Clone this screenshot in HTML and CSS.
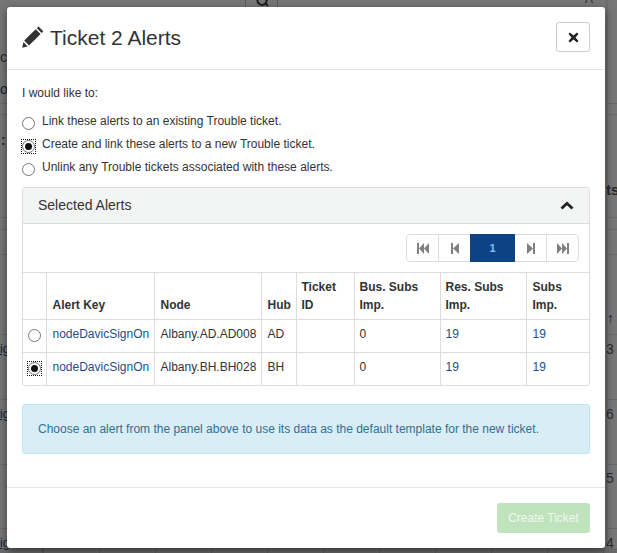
FILE: index.html
```html
<!DOCTYPE html>
<html lang="en">
  <head>
    <meta charset="UTF-8" />
    <title>Ticket 2 Alerts</title>
    <link rel="stylesheet" href="styles.css">
  </head>
  <body>
    <div class="backdrop">
      <span class="bg-line bg-line-a"></span>
      <span class="bg-line bg-line-b"></span>
      <span class="bg-line bg-line-c"></span>
      <span class="bg-line bg-line-d"></span>
      <span class="bg-line bg-line-e"></span>
      <span class="bg-line bg-line-f"></span>
      <span class="bg-line bg-line-g"></span>
      <span class="bg-line bg-line-h"></span>
      <span class="bg-line bg-line-i"></span>
      <span class="bg-band"></span>
      <span class="bg-ticks"></span>
      <span class="bg-frag bg-search">
        <svg width="14" height="8" viewBox="0 0 14 8"><path d="M6 -4a4.500 4.500 0 1 0 0.100 0zM9 3l3 3" fill="none" stroke="#1c1c1c" stroke-width="2"/></svg>
      </span>
      <span class="bg-frag bg-top">A</span>
      <span class="bg-frag bg-l1">c</span>
      <span class="bg-frag bg-l2">o</span>
      <span class="bg-frag bg-l3">:</span>
      <span class="bg-frag bg-l4">ig</span>
      <span class="bg-frag bg-l5">ig</span>
      <span class="bg-frag bg-l6">ig</span>
      <span class="bg-frag bg-r1">ts</span>
      <span class="bg-frag bg-r2">&#8593;</span>
      <span class="bg-frag bg-r3">3</span>
      <span class="bg-frag bg-r4">6</span>
      <span class="bg-frag bg-r5">5</span>
      <span class="bg-frag bg-r6">4</span>
    </div>

    <div class="modal">
      <div class="modal-header">
        <h4 class="modal-title">
          <svg class="pencil" width="22" height="22" viewBox="0 0 22 22">
            <path d="M16.500 0.500l4.800 4.800-1.600 1.700-4.900-4.800zM13.700 3.200l4.900 4.900L7 19.400 2.200 14.600zM1.400 16l4.300 4.400-5.500 1.300z" fill="#333"/>
          </svg>
          Ticket 2 Alerts
        </h4>
        <button class="btn-close">
          <svg width="11" height="11" viewBox="0 0 11 11">
            <path d="M2 0.500L5.500 3.500 9 0.500 10.500 2 7.500 5.500 10.500 9 9 10.500 5.500 7.500 2 10.500 0.500 9 3.500 5.500 0.500 2z" fill="#222"/>
          </svg>
        </button>
      </div>

      <div class="modal-body">
        <p class="intro">I would like to:</p>
        <div class="choices">
          <label class="choice"><span class="radio"></span>Link these alerts to an existing Trouble ticket.</label>
          <label class="choice"><span class="radio checked focused"></span>Create and link these alerts to a new Trouble ticket.</label>
          <label class="choice"><span class="radio"></span>Unlink any Trouble tickets associated with these alerts.</label>
        </div>

        <div class="panel">
          <div class="panel-heading">
            <span>Selected Alerts</span>
            <svg width="14" height="9" viewBox="0 0 14 9">
              <path d="M7 0.500L13.500 6.500 11.500 8.500 7 4.300 2.500 8.500 0.500 6.500z" fill="#222"/>
            </svg>
          </div>
          <div class="toolbar">
            <div class="pager">
              <a class="page">
                <svg width="12" height="11" viewBox="0 0 12 11"><path d="M0 0h2v11H0zM2 5.500l5-5.500v11zM7 5.500l5-5.500v11z" fill="#808080"/></svg>
              </a>
              <a class="page page-narrow">
                <svg width="8" height="11" viewBox="0 0 8 11"><path d="M0 0h2v11H0zM2 5.500l6-5.500v11z" fill="#808080"/></svg>
              </a>
              <a class="page page-active">1</a>
              <a class="page">
                <svg width="8" height="11" viewBox="0 0 8 11"><path d="M8 0H6v11h2zM6 5.500L0 0v11z" fill="#808080"/></svg>
              </a>
              <a class="page page-narrow">
                <svg width="12" height="11" viewBox="0 0 12 11"><path d="M12 0h-2v11h2zM10 5.500L5 0v11zM5 5.500L0 0v11z" fill="#808080"/></svg>
              </a>
            </div>
          </div>
          <table class="alerts">
            <colgroup>
              <col class="col-pick" />
              <col class="col-key" />
              <col class="col-node" />
              <col class="col-hub" />
              <col class="col-ticket" />
              <col class="col-imp" />
              <col class="col-imp" />
              <col />
            </colgroup>
            <thead>
              <tr>
                <th></th>
                <th>Alert Key</th>
                <th>Node</th>
                <th>Hub</th>
                <th class="tight">Ticket ID</th>
                <th class="tight">Bus. Subs Imp.</th>
                <th class="tight">Res. Subs Imp.</th>
                <th>Subs Imp.</th>
              </tr>
            </thead>
            <tbody>
              <tr>
                <td class="pick"><span class="radio"></span></td>
                <td><a class="link">nodeDavicSignOn</a></td>
                <td>Albany.AD.AD008</td>
                <td>AD</td>
                <td class="tight"></td>
                <td class="tight">0</td>
                <td class="tight"><a class="link">19</a></td>
                <td><a class="link">19</a></td>
              </tr>
              <tr>
                <td class="pick"><span class="radio checked focused"></span></td>
                <td><a class="link">nodeDavicSignOn</a></td>
                <td>Albany.BH.BH028</td>
                <td>BH</td>
                <td class="tight"></td>
                <td class="tight">0</td>
                <td class="tight"><a class="link">19</a></td>
                <td><a class="link">19</a></td>
              </tr>
            </tbody>
          </table>
        </div>

        <div class="alert-info">Choose an alert from the panel above to use its data as the default template for the new ticket.</div>
      </div>

      <div class="modal-footer">
        <button class="btn-create" disabled>Create Ticket</button>
      </div>
    </div>
  </body>
</html>
```

FILE: styles.css
```css
* {
  box-sizing: border-box;
}
html,
body {
  height: 100%;
}
body {
  margin: 0;
  padding: 7px 12px 5px 7px;
  overflow: hidden;
  position: relative;
  background: #767676;
  font-family: "Liberation Sans", Arial, sans-serif;
  font-size: 12px;
  line-height: 17px;
  color: #333;
}

/* dimmed page behind the dialog */
.backdrop {
  position: absolute;
  inset: 0;
}
.bg-line {
  position: absolute;
  left: 0;
  right: 0;
  height: 1px;
  background: #696969;
}
.bg-line-a {
  top: 103px;
}
.bg-line-b {
  top: 114px;
}
.bg-line-c {
  top: 217px;
}
.bg-line-d {
  top: 229px;
}
.bg-line-e {
  top: 254px;
}
.bg-line-f {
  top: 334px;
}
.bg-line-g {
  top: 399px;
}
.bg-line-h {
  top: 464px;
}
.bg-line-i {
  top: 528px;
}
.bg-band {
  position: absolute;
  top: 0;
  bottom: 0;
  left: 606px;
  width: 2px;
  background: #6c6c6c;
}
.bg-ticks {
  position: absolute;
  left: 0;
  right: 0;
  bottom: 0;
  height: 5px;
  background-color: #6a6a6a;
  background-image: repeating-linear-gradient(90deg, #5a5a5a 0 1px, transparent 1px 56px);
  background-position: 43px 0;
}
.bg-frag {
  position: absolute;
  font-size: 14px;
  line-height: 16px;
  color: #2b2b2b;
}
.bg-search {
  left: 245px;
  top: 0;
  width: 33px;
  height: 7px;
  padding-left: 10px;
  border-left: 1px solid #5c5c5c;
  border-right: 1px solid #5c5c5c;
  line-height: 0;
}
.bg-top {
  left: 585px;
  top: -9px;
  font-size: 12px;
}
.bg-l1 {
  left: 0;
  top: 49px;
}
.bg-l2 {
  left: 0;
  top: 81px;
  color: #10243f;
}
.bg-l3 {
  left: 1px;
  top: 132px;
  font-weight: bold;
}
.bg-l4 {
  left: 0;
  top: 341px;
  font-size: 12px;
  color: #10243f;
  text-decoration: underline;
}
.bg-l5 {
  left: 0;
  top: 406px;
  font-size: 12px;
  color: #10243f;
  text-decoration: underline;
}
.bg-l6 {
  left: 0;
  top: 535px;
  font-size: 12px;
  color: #10243f;
  text-decoration: underline;
}
.bg-r1 {
  left: 606px;
  top: 182px;
  font-weight: bold;
  font-size: 15px;
}
.bg-r2 {
  left: 607px;
  top: 310px;
  font-weight: bold;
  color: #10243f;
}
.bg-r3 {
  left: 606px;
  top: 341px;
}
.bg-r4 {
  left: 606px;
  top: 406px;
}
.bg-r5 {
  left: 606px;
  top: 470px;
}
.bg-r6 {
  left: 606px;
  top: 535px;
}

.modal {
  position: relative;
  height: 541px;
  background: #fff;
  border-radius: 3px;
  box-shadow: 0 3px 9px rgba(0, 0, 0, 0.5);
  display: flex;
  flex-direction: column;
}
.modal-header {
  height: 63px;
  padding: 15px 15px 0;
  border-bottom: 1px solid #e5e5e5;
  display: flex;
  justify-content: space-between;
  align-items: flex-start;
}
.modal-title {
  margin: 0;
  padding-top: 1px;
  display: flex;
  align-items: center;
  gap: 6px;
  height: 31px;
  font-size: 21px;
  font-weight: normal;
  line-height: 30px;
}
.pencil {
  margin-top: -3px;
}
.btn-close {
  width: 34px;
  height: 30px;
  padding: 0;
  background: #fff;
  border: 1px solid #ccc;
  border-radius: 3px;
  display: flex;
  align-items: center;
  justify-content: center;
}

.modal-body {
  flex: 1;
  padding: 15px 15px 0;
}
.intro {
  margin: 0 0 11px;
}
.choices {
  display: flex;
  flex-direction: column;
  gap: 6px;
  margin-bottom: 11px;
}
.choice {
  display: flex;
  align-items: center;
  gap: 7px;
  height: 17px;
}
.radio {
  flex: none;
  display: inline-block;
  position: relative;
  top: 2px;
  width: 13px;
  height: 13px;
  background: #fff;
  border: 1px solid #767676;
  border-radius: 50%;
}
.radio.checked::after {
  content: "";
  position: absolute;
  inset: 2px;
  background: #111;
  border-radius: 50%;
}
/* square dotted focus ring of the old browser */
.radio.focused::before {
  content: "";
  position: absolute;
  inset: -2px;
  border: 1px dotted #111;
}

.panel {
  border: 1px solid #ddd;
  border-radius: 3px;
  margin-bottom: 18px;
  overflow: hidden;
}
.panel-heading {
  height: 36px;
  padding: 0 15px;
  background: #f3f5f5;
  border-bottom: 1px solid #ddd;
  display: flex;
  align-items: center;
  justify-content: space-between;
  font-size: 14px;
}
.toolbar {
  height: 49px;
  padding: 10px 10px 0;
  border-bottom: 1px solid #ddd;
  display: flex;
  justify-content: flex-end;
}
.pager {
  display: flex;
  height: 28px;
  border: 1px solid #ddd;
  border-radius: 4px;
}
.page {
  width: 32px;
  display: flex;
  align-items: center;
  justify-content: center;
  border-right: 1px solid #ddd;
}
.page-narrow {
  width: 31px;
  border-right: none;
}
.page-active {
  width: 45px;
  margin: -1px 0;
  background: #0d4287;
  border-right: none;
  color: #7fc4f0;
  font-size: 11px;
  font-weight: bold;
}

.alerts {
  width: 100%;
  table-layout: fixed;
  border-collapse: collapse;
}
.col-pick {
  width: 23px;
}
.col-key {
  width: 108px;
}
.col-node {
  width: 107px;
}
.col-hub {
  width: 35px;
}
.col-ticket {
  width: 58px;
}
.col-imp {
  width: 86px;
}
.alerts th,
.alerts td {
  border: 1px solid #ddd;
  text-align: left;
  vertical-align: top;
}
.alerts tr > :first-child {
  border-left: none;
}
.alerts tr > :last-child {
  border-right: none;
}
.alerts thead tr > * {
  border-top: none;
}
.alerts tbody tr:last-child > * {
  border-bottom: none;
}
.alerts th {
  height: 46px;
  padding: 4px 5px 5px 6px;
  line-height: 18px;
  vertical-align: bottom;
}
.alerts td {
  height: 33px;
  padding: 6px 5px 5px 6px;
  white-space: nowrap;
}
.alerts .tight {
  padding-left: 5px;
}
.alerts .pick {
  padding: 7px 0 0 5px;
}
.link {
  color: #1a4f8b;
}

.alert-info {
  height: 50px;
  padding: 0 15px;
  display: flex;
  align-items: center;
  background: #d9edf7;
  border: 1px solid #bce8f1;
  border-radius: 3px;
  color: #31708f;
}

.modal-footer {
  height: 61px;
  padding: 15px 15px 0;
  border-top: 1px solid #e5e5e5;
  display: flex;
  justify-content: flex-end;
}
.btn-create {
  width: 93px;
  height: 30px;
  padding: 0;
  background: #bfe3bc;
  border: none;
  border-radius: 3px;
  color: #f0f8ef;
  font: 12px "Liberation Sans", Arial, sans-serif;
}
```
